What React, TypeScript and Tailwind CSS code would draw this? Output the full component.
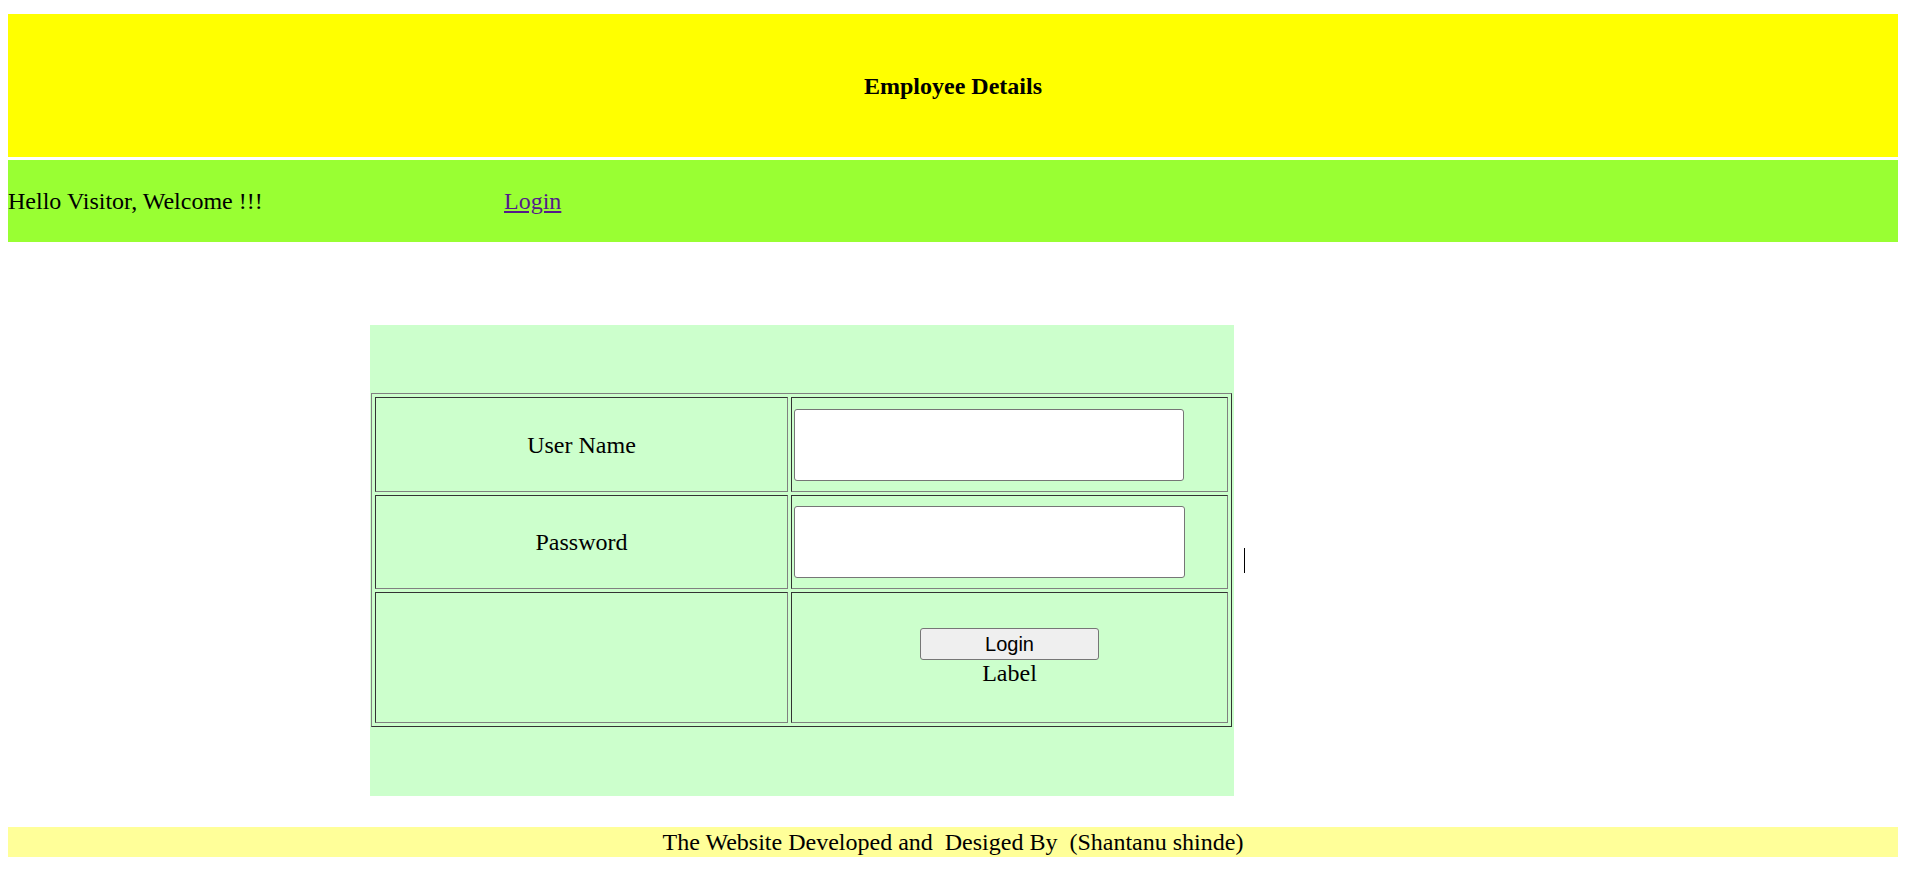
export default function App() {
  return (
    <div className="min-h-screen bg-white pt-[14px] pl-[8px] pr-[12px] font-['Liberation_Serif','Times_New_Roman',serif] text-[24px] text-black">
      {/* banner */}
      <header className="flex h-[143px] items-center justify-center bg-[#ffff00]">
        <h3 className="font-bold">Employee Details</h3>
      </header>

      {/* welcome strip */}
      <div className="mt-[3px] flex h-[82px] items-center bg-[#99ff33]">
        <span className="w-[496px]">Hello Visitor, Welcome !!!</span>
        <a href="#" className="text-[#551a8b] underline">
          Login
        </a>
      </div>

      {/* login box */}
      <div className="mt-[83px] flex items-center pl-[362px]">
        <div className="h-[471px] w-[864px] bg-[#ccffcc] pt-[68px] pl-[1px]">
          <div className="grid w-[861px] grid-cols-[413px_437px] grid-rows-[95px_94px_131px] gap-[3px] border border-t-[#808080] border-l-[#808080] border-r-[#333333] border-b-[#333333] p-[3px]">
            <div className="flex items-center justify-center border border-t-[#333333] border-l-[#333333] border-r-[#808080] border-b-[#808080]">
              User Name
            </div>
            <div className="flex items-center border border-t-[#333333] border-l-[#333333] border-r-[#808080] border-b-[#808080] pl-[2px]">
              <input
                type="text"
                className="h-[72px] w-[390px] rounded-[3px] border border-[#767676] bg-white outline-none"
              />
            </div>

            <div className="flex items-center justify-center border border-t-[#333333] border-l-[#333333] border-r-[#808080] border-b-[#808080]">
              Password
            </div>
            <div className="flex items-center border border-t-[#333333] border-l-[#333333] border-r-[#808080] border-b-[#808080] pl-[2px]">
              <input
                type="password"
                className="h-[72px] w-[391px] rounded-[3px] border border-[#767676] bg-white outline-none"
              />
            </div>

            <div className="border border-t-[#333333] border-l-[#333333] border-r-[#808080] border-b-[#808080]" />
            <div className="flex flex-col items-center justify-center border border-t-[#333333] border-l-[#333333] border-r-[#808080] border-b-[#808080]">
              <button
                type="button"
                className="h-[32px] w-[179px] rounded-[3px] border border-[#767676] bg-[#efefef] font-['Liberation_Sans',Arial,sans-serif] text-[20px] leading-none"
              >
                Login
              </button>
              <span className="leading-[27px]">Label</span>
            </div>
          </div>
        </div>
        <span className="ml-[10px] h-[25px] w-px bg-black" />
      </div>

      {/* footer */}
      <footer className="mt-[31px] flex h-[30px] items-center justify-center whitespace-pre bg-[#ffff99]">
        {"The Website Developed and  Desiged By  (Shantanu shinde)"}
      </footer>
    </div>
  );
}
